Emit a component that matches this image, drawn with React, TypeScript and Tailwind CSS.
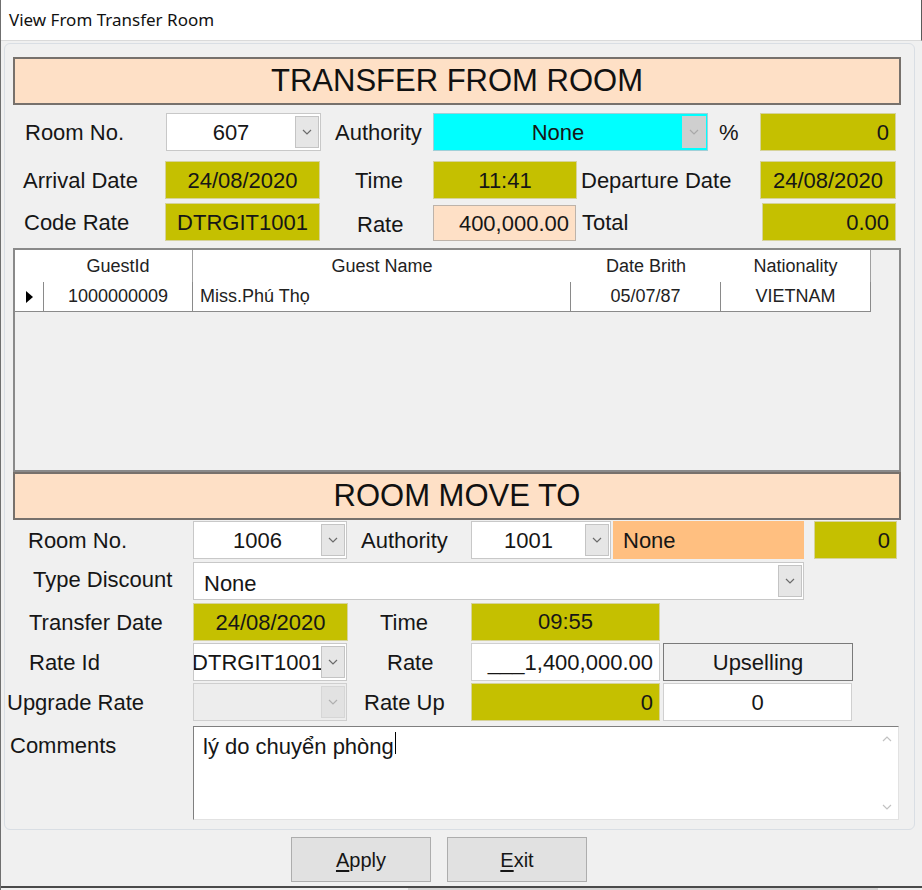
import React from 'react';

const font = "font-['Liberation_Sans',Arial,sans-serif]";

interface BoxProps {
  className?: string;
  children?: React.ReactNode;
}

function Chevron({ up = false, color = '#6b6b6b' }: { up?: boolean; color?: string }) {
  return (
    <svg width="10" height="6" viewBox="0 0 10 6" fill="none">
      <polyline
        points={up ? '1,5 5,1 9,5' : '1,1 5,5 9,1'}
        stroke={color}
        strokeWidth="1.2"
      />
    </svg>
  );
}

function Label({ className = '', children }: BoxProps) {
  return (
    <div className={`flex items-center whitespace-nowrap text-[22px] text-[#161616] ${className}`}>
      {children}
    </div>
  );
}

// flat coloured box, like a read-only textbox
function Field({ className = '', children }: BoxProps) {
  return (
    <div className={`flex items-center whitespace-nowrap text-[22px] text-[#161616] ${className}`}>
      {children}
    </div>
  );
}

interface ComboProps {
  className?: string;
  textClass?: string;
  arrowClass?: string;
  arrowColor?: string;
  text?: string;
}

function Combo({
  className = '',
  textClass = 'justify-center',
  arrowClass = 'bg-[#e6e6e6] border-[#c4c4c4]',
  arrowColor = '#6b6b6b',
  text = '',
}: ComboProps) {
  return (
    <div className={`flex items-stretch border ${className}`}>
      <div className={`flex flex-1 items-center overflow-hidden whitespace-nowrap text-[22px] text-[#161616] ${textClass}`}>
        {text}
      </div>
      <div className={`my-[2px] mr-[1px] flex w-[24px] shrink-0 items-center justify-center border ${arrowClass}`}>
        <Chevron color={arrowColor} />
      </div>
    </div>
  );
}

function SectionHeader({ title, className = '' }: { title: string; className?: string }) {
  return (
    <div
      className={`ml-[8px] flex h-[48px] w-[888px] items-center justify-center border-2 border-[#77716c] bg-[#fee0c6] text-[31px] text-[#111] ${className}`}
    >
      {title}
    </div>
  );
}

const olive = 'bg-[#c5c000] border border-[#d6d39a]';

export default function App() {
  return (
    <div className={`relative h-[890px] w-[922px] overflow-hidden border-l border-[#6f6f6f] bg-[#f0f0f0] ${font}`}>
      {/* title bar */}
      <div className="flex h-[41px] items-center border-b border-r border-b-[#dadada] border-r-[#5a5a5a] bg-white pl-[8px] font-['Noto_Sans',sans-serif] text-[17px] text-[#111]">
        View From Transfer Room
      </div>

      <div className="ml-[3px] mt-[2px] h-[787px] w-[911px] rounded-[6px] border border-[#d9dee4] bg-[#f0f0f0]">
        <SectionHeader title="TRANSFER FROM ROOM" className="mt-[13px]" />

        {/* row 1 */}
        <div className="mt-[8px] flex h-[38px]">
          <Label className="ml-[20px] w-[141px]">Room No.</Label>
          <Combo className="w-[155px] border-[#c8c8c8] bg-white" text="607" />
          <Label className="ml-[14px] w-[98px]">Authority</Label>
          <Combo
            className="w-[275px] border-[#9fd0d8] bg-[#00ffff]"
            arrowClass="bg-[#cfcfcf] border-[#cfcfcf]"
            arrowColor="#a9a9a9"
            text="None"
          />
          <Label className="ml-[11px] w-[41px]">%</Label>
          <Field className={`w-[136px] justify-end pr-[6px] ${olive}`}>0</Field>
        </div>

        {/* row 2 */}
        <div className="mt-[10px] flex h-[38px]">
          <Label className="ml-[18px] w-[142px]">Arrival Date</Label>
          <Field className={`w-[155px] justify-center ${olive}`}>24/08/2020</Field>
          <Label className="w-[113px] pl-[35px]">Time</Label>
          <Field className={`w-[144px] justify-center ${olive}`}>11:41</Field>
          <Label className="w-[183px] pl-[4px]">Departure Date</Label>
          <Field className={`w-[136px] justify-center ${olive}`}>24/08/2020</Field>
        </div>

        {/* row 3 */}
        <div className="mt-[4px] flex h-[38px]">
          <Label className="ml-[19px] w-[141px]">Code Rate</Label>
          <Field className={`w-[155px] justify-center ${olive}`}>DTRGIT1001</Field>
          <Label className="w-[113px] pl-[37px] pt-[4px]">Rate</Label>
          <Field className="mt-[2px] w-[143px] justify-end border border-[#bdb3aa] bg-[#fee0c6] pr-[6px]">
            400,000.00
          </Field>
          <Label className="w-[186px] pl-[6px]">Total</Label>
          <Field className={`w-[134px] justify-end pr-[6px] ${olive}`}>0.00</Field>
        </div>

        {/* guest grid */}
        <div className="ml-[8px] mt-[7px] h-[224px] w-[888px] border-2 border-[#8a8a8a] bg-[#f0f0f0] text-[18px] text-[#222]">
          <div className="flex h-[32px]">
            <div className="w-[29px] bg-white" />
            <div className="flex w-[149px] items-center justify-center border-r border-[#a0a0a0] bg-white">GuestId</div>
            <div className="flex w-[378px] items-center justify-center bg-white">Guest Name</div>
            <div className="flex w-[150px] items-center justify-center bg-white">Date Brith</div>
            <div className="flex w-[150px] items-center justify-center border-r border-[#a0a0a0] bg-white">
              Nationality
            </div>
          </div>
          <div className="flex h-[30px]">
            <div className="flex w-[29px] items-center justify-center border-b border-r border-[#8a8a8a] bg-white">
              <svg width="9" height="14" viewBox="0 0 9 14">
                <polygon points="1,1 8,7 1,13" fill="#000" />
              </svg>
            </div>
            <div className="flex w-[149px] items-center justify-center border-b border-r border-[#8a8a8a] bg-white">
              1000000009
            </div>
            <div className="flex w-[378px] items-center border-b border-r border-[#8a8a8a] bg-white pl-[7px]">
              Miss.Phú Thọ
            </div>
            <div className="flex w-[150px] items-center justify-center border-b border-r border-[#8a8a8a] bg-white">
              05/07/87
            </div>
            <div className="flex w-[150px] items-center justify-center border-b border-r border-[#8a8a8a] bg-white">
              VIETNAM
            </div>
          </div>
        </div>

        <SectionHeader title="ROOM MOVE TO" />

        {/* row A */}
        <div className="mt-[1px] flex h-[38px]">
          <Label className="ml-[23px] w-[165px]">Room No.</Label>
          <Combo className="w-[154px] border-[#c8c8c8] bg-white" text="1006" />
          <Label className="ml-[14px] w-[110px]">Authority</Label>
          <Combo className="w-[140px] border-[#c8c8c8] bg-white" text="1001" />
          <Field className="ml-[2px] w-[191px] bg-[#ffbf80] pl-[10px]">None</Field>
          <Field className={`ml-[10px] w-[83px] justify-end pr-[6px] ${olive}`}>0</Field>
        </div>

        {/* row B */}
        <div className="mt-[3px] flex h-[38px]">
          <Label className="ml-[28px] w-[160px] pb-[4px]">Type Discount</Label>
          <Combo
            className="w-[611px] border-[#c8c8c8] bg-white"
            textClass="justify-start pl-[10px] pt-[4px]"
            text="None"
          />
        </div>

        {/* row C */}
        <div className="mt-[3px] flex h-[38px]">
          <Label className="ml-[24px] w-[164px]">Transfer Date</Label>
          <Field className={`w-[155px] justify-center ${olive}`}>24/08/2020</Field>
          <Label className="w-[123px] pl-[32px]">Time</Label>
          <Field className={`w-[189px] justify-center pb-[2px] ${olive}`}>09:55</Field>
        </div>

        {/* row D */}
        <div className="mt-[2px] flex h-[38px]">
          <Label className="ml-[24px] w-[164px]">Rate Id</Label>
          <Combo className="w-[154px] border-[#c8c8c8] bg-white" text="DTRGIT1001" />
          <Label className="w-[124px] pl-[40px]">Rate</Label>
          <Field className="w-[189px] justify-end border border-[#d0d0d0] bg-white pr-[6px]">___1,400,000.00</Field>
          <button className="ml-[3px] flex w-[190px] items-center justify-center border border-[#7a7a7a] bg-[#efefef] text-[22px] text-[#161616]">
            Upselling
          </button>
        </div>

        {/* row E */}
        <div className="mt-[2px] flex h-[38px]">
          <Label className="ml-[2px] w-[186px]">Upgrade Rate</Label>
          <Combo
            className="w-[154px] border-[#cfcfcf] bg-[#ededed]"
            arrowClass="bg-[#e2e2e2] border-[#d6d6d6]"
            arrowColor="#b0b0b0"
          />
          <Label className="w-[124px] pl-[17px]">Rate Up</Label>
          <Field className={`w-[189px] justify-end pr-[6px] ${olive}`}>0</Field>
          <Field className="ml-[3px] w-[189px] justify-center border border-[#d0d0d0] bg-white">0</Field>
        </div>

        {/* comments */}
        <div className="mt-[5px] flex">
          <div className="ml-[5px] w-[183px] pt-[3px] text-[22px] text-[#161616]">Comments</div>
          <div className="flex h-[94px] w-[706px] border border-b-[#e2e2e2] border-l-[#7f7f7f] border-r-[#e2e2e2] border-t-[#7f7f7f] bg-white">
            <div className="flex flex-1 items-start pl-[9px] pt-[3px] text-[22px] text-[#161616]">
              lý do chuyển phòng
              <span className="ml-[1px] mt-[2px] inline-block h-[22px] w-[1px] bg-black" />
            </div>
            <div className="flex w-[22px] flex-col items-center justify-between py-[9px]">
              <Chevron up color="#c2c2c2" />
              <Chevron color="#c2c2c2" />
            </div>
          </div>
        </div>
      </div>

      {/* buttons */}
      <div className="mt-[7px] flex h-[45px]">
        <button className="ml-[290px] flex w-[140px] items-center justify-center border border-[#adadad] bg-[#e1e1e1] text-[20px] text-[#161616]">
          <span>
            <u className="underline-offset-[3px]">A</u>pply
          </span>
        </button>
        <button className="ml-[16px] flex w-[140px] items-center justify-center border border-[#adadad] bg-[#e1e1e1] text-[20px] text-[#161616]">
          <span>
            <u className="underline-offset-[3px]">E</u>xit
          </span>
        </button>
      </div>

      <div className="mt-[4px] h-[2px] w-full bg-[#4a4a4a]" />
      <div className="flex h-[6px]">
        <div className="ml-[407px] w-[470px] bg-[#d4d4d4]" />
      </div>
    </div>
  );
}
